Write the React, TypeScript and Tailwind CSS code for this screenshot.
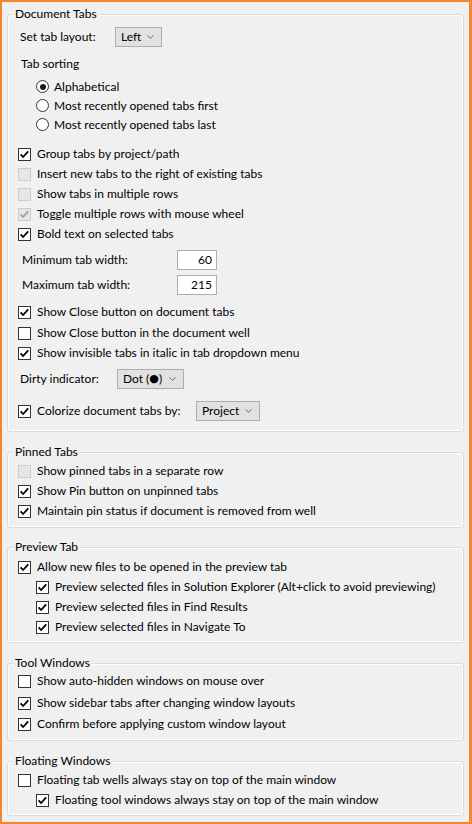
import React from "react";

const FONT = { fontFamily: "Lato, 'Liberation Sans', sans-serif" };

function Box({ checked, disabled }: { checked?: boolean; disabled?: boolean }) {
  return (
    <span
      className={
        disabled
          ? "flex h-[13px] w-[13px] shrink-0 items-center justify-center border border-[#cccccc] bg-[#e6e6e6]"
          : "flex h-[13px] w-[13px] shrink-0 items-center justify-center border border-[#333333] bg-white"
      }
    >
      {checked && (
        <svg width="11" height="11" viewBox="0 0 11 11">
          <path
            d="M1.6 5.4 L4.1 8 L9.2 2.4"
            fill="none"
            stroke={disabled ? "#a0a0a0" : "#000000"}
            strokeWidth="1.8"
          />
        </svg>
      )}
    </span>
  );
}

function Check({
  label,
  checked,
  disabled,
  className,
}: {
  label: string;
  checked?: boolean;
  disabled?: boolean;
  className?: string;
}) {
  return (
    <div className={"flex h-[20px] items-center gap-[6px] " + (className ?? "")}>
      <Box checked={checked} disabled={disabled} />
      <span className="whitespace-nowrap">{label}</span>
    </div>
  );
}

function Radio({ label, selected, className }: { label: string; selected?: boolean; className?: string }) {
  return (
    <div className={"flex h-[19px] items-center gap-[5px] pl-[18px] " + (className ?? "")}>
      <span className="flex h-[13px] w-[13px] shrink-0 items-center justify-center rounded-full border border-[#333333] bg-white">
        {selected && <span className="h-[6px] w-[6px] rounded-full bg-[#1a1a1a]" />}
      </span>
      <span className="whitespace-nowrap">{label}</span>
    </div>
  );
}

function Chevron() {
  return (
    <svg width="7" height="4" viewBox="0 0 7 4" className="shrink-0">
      <path d="M0.5 0.5 L3.5 3.3 L6.5 0.5" fill="none" stroke="#6d6d6d" strokeWidth="1" />
    </svg>
  );
}

function Dropdown({ value, className }: { value: React.ReactNode; className: string }) {
  return (
    <div
      className={
        "flex h-[20px] items-center justify-between border border-[#adadad] bg-[#e1e1e1] pl-[5px] pr-[7px] " +
        className
      }
    >
      <span className="flex items-center whitespace-nowrap">{value}</span>
      <Chevron />
    </div>
  );
}

function NumInput({ value }: { value: string }) {
  return (
    <div className="flex h-[20px] w-[40px] items-center justify-end border border-[#abadb3] bg-white pr-[4px]">
      {value}
    </div>
  );
}

function Group({
  title,
  className,
  children,
}: {
  title: string;
  className?: string;
  children: React.ReactNode;
}) {
  return (
    <fieldset
      className={
        "rounded-[3px] border border-[#d5dde3] shadow-[inset_0_0_0_1px_#ffffff] " + (className ?? "")
      }
    >
      <legend className="ml-[5px] bg-[#f0f0f0] px-[2px] text-[12px] leading-[16px] text-black">{title}</legend>
      {children}
    </fieldset>
  );
}

export default function App() {
  return (
    <div
      style={FONT}
      className="box-border flex h-[824px] w-[472px] flex-col border-b-[2px] border-l-[2px] border-r-[3px] border-t-[2px] border-[#f7852b] bg-[#f0f0f0] pl-[5px] pr-[5px] pt-[4px] text-[12px] leading-[16px] text-black"
    >
      <Group title="Document Tabs">
        <div className="flex flex-col pb-[10px] pl-[10px]">
          <div className="mt-[5px] flex h-[20px] items-center pl-[2px]">
            <span className="w-[95px] whitespace-nowrap">Set tab layout:</span>
            <Dropdown value="Left" className="w-[47px]" />
          </div>
          <div className="mt-[7px] flex h-[20px] items-center pl-[3px]">Tab sorting</div>
          <Radio label="Alphabetical" selected className="mt-[3px]" />
          <Radio label="Most recently opened tabs first" />
          <Radio label="Most recently opened tabs last" />
          <Check label="Group tabs by project/path" checked className="mt-[10px]" />
          <Check label="Insert new tabs to the right of existing tabs" disabled />
          <Check label="Show tabs in multiple rows" disabled />
          <Check label="Toggle multiple rows with mouse wheel" checked disabled />
          <Check label="Bold text on selected tabs" checked />
          <div className="mt-[6px] flex h-[20px] items-center pl-[4px]">
            <span className="w-[155px] whitespace-nowrap">Minimum tab width:</span>
            <NumInput value="60" />
          </div>
          <div className="mt-[5px] flex h-[20px] items-center pl-[4px]">
            <span className="w-[155px] whitespace-nowrap">Maximum tab width:</span>
            <NumInput value="215" />
          </div>
          <Check label="Show Close button on document tabs" checked className="mt-[7px]" />
          <Check label="Show Close button in the document well" className="mt-[1px]" />
          <Check label="Show invisible tabs in italic in tab dropdown menu" checked />
          <div className="mt-[6px] flex h-[20px] items-center pl-[2px]">
            <span className="w-[97px] whitespace-nowrap">Dirty indicator:</span>
            <Dropdown
              value={
                <>
                  Dot (
                  <span className="text-[11px] leading-[16px]" style={{ fontFamily: "'DejaVu Sans', sans-serif" }}>
                    ●
                  </span>
                  )
                </>
              }
              className="w-[67px]"
            />
          </div>
          <div className="mt-[12px] flex h-[20px] items-center">
            <Box checked />
            <span className="ml-[6px] w-[159px] whitespace-nowrap">Colorize document tabs by:</span>
            <Dropdown value="Project" className="w-[64px]" />
          </div>
        </div>
      </Group>

      <Group title="Pinned Tabs" className="mt-[12px]">
        <div className="flex flex-col pb-[6px] pl-[10px]">
          <Check label="Show pinned tabs in a separate row" disabled className="mt-[1px]" />
          <Check label="Show Pin button on unpinned tabs" checked />
          <Check label="Maintain pin status if document is removed from well" checked />
        </div>
      </Group>

      <Group title="Preview Tab" className="mt-[11px]">
        <div className="flex flex-col pb-[5px] pl-[10px]">
          <Check label="Allow new files to be opened in the preview tab" checked className="mt-[2px]" />
          <Check
            label="Preview selected files in Solution Explorer (Alt+click to avoid previewing)"
            checked
            className="pl-[18px]"
          />
          <Check label="Preview selected files in Find Results" checked className="pl-[18px]" />
          <Check label="Preview selected files in Navigate To" checked className="pl-[18px]" />
        </div>
      </Group>

      <Group title="Tool Windows" className="mt-[12px]">
        <div className="flex flex-col pb-[6px] pl-[10px]">
          <Check label="Show auto-hidden windows on mouse over" />
          <Check label="Show sidebar tabs after changing window layouts" checked className="mt-[2px]" />
          <Check label="Confirm before applying custom window layout" checked className="mt-[1px]" />
        </div>
      </Group>

      <Group title="Floating Windows" className="mt-[12px]">
        <div className="flex flex-col pb-[5px] pl-[10px]">
          <Check label="Floating tab wells always stay on top of the main window" className="mt-[1px]" />
          <Check
            label="Floating tool windows always stay on top of the main window"
            checked
            className="pl-[18px]"
          />
        </div>
      </Group>
    </div>
  );
}
